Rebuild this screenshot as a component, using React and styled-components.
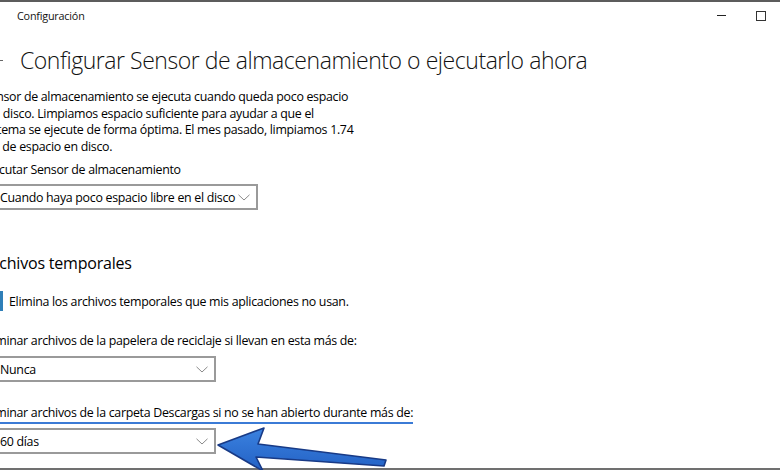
import React from 'react';
import styled, { createGlobalStyle } from 'styled-components';

const GlobalStyle = createGlobalStyle`
    html, body {
        margin: 0;
        padding: 0;
        background: #fff;
        overflow: hidden;
    }
    body {
        font-family: "Open Sans", "Noto Sans", sans-serif;
        color: #000;
    }
`;

const Window = styled.div`
    position: relative;
    width: 780px;
    height: 470px;
    box-sizing: border-box;
    border-top: 2px solid #5c5c5c;
    overflow: hidden;
    background: #fff;
`;

const TitleBar = styled.div`
    height: 27px;
    display: flex;
    align-items: center;
    padding-left: 17px;
    font-size: 10.8px;
    letter-spacing: -0.2px;
    color: #111;
`;

const TitleText = styled.span`
    flex: 1;
`;

const WindowButton = styled.div`
    width: 39px;
    height: 27px;
    display: flex;
    align-items: center;
    justify-content: center;
`;

const MinGlyph = styled.span`
    width: 9px;
    height: 1px;
    background: #222;
`;

const MaxGlyph = styled.span`
    width: 8px;
    height: 8px;
    border: 1px solid #333;
`;

const Header = styled.div`
    display: flex;
    align-items: center;
    margin-top: 13px;
    height: 36px;
`;

const BackTip = styled.span`
    width: 3px;
    height: 1px;
    background: #666;
    margin-right: 17px;
`;

const PageTitle = styled.h1`
    margin: 0;
    font-size: 23px;
    font-weight: 300;
    letter-spacing: -0.45px;
    line-height: 36px;
    color: #111;
`;

const Content = styled.div`
    margin-left: -17px;
    font-size: 12.4px;
    letter-spacing: -0.3px;
    white-space: nowrap;
`;

const Paragraph = styled.p`
    margin: 11px 0 0;
    line-height: 16.5px;
`;

const Label = styled.div`
    margin-top: ${p => p.$top}px;
    line-height: 18px;
`;

const UnderlinedLabel = styled.span`
    display: inline-block;
    line-height: 18px;
    border-bottom: 2px solid #3b7bd6;
`;

const Select = styled.div`
    margin-top: ${p => p.$top}px;
    width: ${p => p.$width}px;
    height: 26px;
    box-sizing: border-box;
    border: 2px solid #9a9a9a;
    display: flex;
    align-items: center;
    padding: 0 6px 0 15px;
`;

const SelectValue = styled.span`
    flex: 1;
`;

const Chevron = () => (
    <svg width="12" height="7" viewBox="0 0 12 7">
        <path d="M0.5 0.8 L6 6 L11.5 0.8" fill="none" stroke="#8a8a8a" strokeWidth="1" />
    </svg>
);

const SectionTitle = styled.h2`
    margin: 41px 0 0;
    font-size: 16px;
    font-weight: 400;
    letter-spacing: -0.2px;
    line-height: 24px;
`;

const CheckRow = styled.div`
    margin-top: 16px;
    display: flex;
    align-items: center;
    gap: 6px;
    height: 20px;
`;

const CheckBox = styled.span`
    width: 20px;
    height: 20px;
    background: #2f7fb8;
    display: flex;
    align-items: center;
    justify-content: center;
`;

const BottomRule = styled.div`
    margin-top: 14px;
    height: 2px;
    background: #707070;
    margin-left: 17px;
`;

const Arrow = styled.svg`
    position: absolute;
    left: 0;
    top: 0;
    pointer-events: none;
`;

const selects = {
    run: 'Cuando haya poco espacio libre en el disco',
    bin: 'Nunca',
    downloads: '60 días'
};

const App = () => (
    <Window>
        <GlobalStyle />
        <TitleBar>
            <TitleText>Configuración</TitleText>
            <WindowButton><MinGlyph /></WindowButton>
            <WindowButton><MaxGlyph /></WindowButton>
        </TitleBar>

        <Header>
            <BackTip />
            <PageTitle>Configurar Sensor de almacenamiento o ejecutarlo ahora</PageTitle>
        </Header>

        <Content>
            <Paragraph>
                Sensor de almacenamiento se ejecuta cuando queda poco espacio<br />
                en&nbsp; disco. Limpiamos espacio suficiente para ayudar a que el<br />
                sistema se ejecute de forma óptima. El mes pasado, limpiamos 1.74<br />
                GB de espacio en disco.
            </Paragraph>

            <Label $top={6}>Ejecutar Sensor de almacenamiento</Label>
            <Select $top={5} $width={275}>
                <SelectValue>{selects.run}</SelectValue>
                <Chevron />
            </Select>

            <SectionTitle>Archivos temporales</SectionTitle>

            <CheckRow>
                <CheckBox>
                    <svg width="12" height="10" viewBox="0 0 12 10">
                        <path d="M1 5 L4.5 8.5 L11 1.5" fill="none" stroke="#fff" strokeWidth="1.5" />
                    </svg>
                </CheckBox>
                <span>Elimina los archivos temporales que mis aplicaciones no usan.</span>
            </CheckRow>

            <Label $top={21}>Eliminar archivos de la papelera de reciclaje si llevan en esta más de:</Label>
            <Select $top={6} $width={233}>
                <SelectValue>{selects.bin}</SelectValue>
                <Chevron />
            </Select>

            <Label $top={22}>
                <UnderlinedLabel>Eliminar archivos de la carpeta Descargas si no se han abierto durante más de:</UnderlinedLabel>
            </Label>
            <Select $top={4} $width={233}>
                <SelectValue>{selects.downloads}</SelectValue>
                <Chevron />
            </Select>

            <BottomRule />
        </Content>

        {/* annotation arrow pointing at the downloads dropdown */}
        <Arrow width="780" height="470" viewBox="0 0 780 470">
            <defs>
                <linearGradient id="arrowFill" x1="0" y1="0" x2="0" y2="1">
                    <stop offset="0" stopColor="#3b82e0" />
                    <stop offset="1" stopColor="#2361c4" />
                </linearGradient>
            </defs>
            <path
                d="M218 443 L264 426 L258 442 L386 458 L384 464 L256 455 L263 469 Z"
                fill="url(#arrowFill)"
                stroke="#183a86"
                strokeWidth="1.6"
                strokeLinejoin="round"
            />
        </Arrow>
    </Window>
);

export default App;
